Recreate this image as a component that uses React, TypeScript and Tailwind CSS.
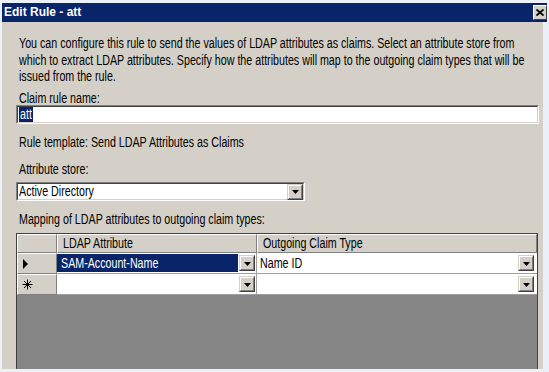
import React from "react";

const F = "font-['Liberation_Sans',Arial,sans-serif]";

function S({ children, className = "" }: { children: React.ReactNode; className?: string }) {
  return <span className={"inline-block scale-y-[1.3] " + className}>{children}</span>;
}

function DropBtn() {
  return (
    <div className="w-[16px] h-[16px] shrink-0 bg-[#d4d0c8] border border-t-[#d4d0c8] border-l-[#d4d0c8] border-r-[#404040] border-b-[#404040] flex">
      <div className="flex-1 border border-t-white border-l-white border-r-[#808080] border-b-[#808080] flex items-center justify-center pt-[1px]">
        <svg width="7" height="4" viewBox="0 0 7 4">
          <path d="M0 0h7L3.5 4z" fill="#000" />
        </svg>
      </div>
    </div>
  );
}

function Sunken({ className = "", children }: { className?: string; children?: React.ReactNode }) {
  return (
    <div className={"border border-t-[#808080] border-l-[#808080] border-r-white border-b-white " + className}>
      <div className="h-full border border-t-[#404040] border-l-[#404040] border-r-[#d4d0c8] border-b-[#d4d0c8] bg-white flex items-center">
        {children}
      </div>
    </div>
  );
}

function Raised({ className = "", children }: { className?: string; children?: React.ReactNode }) {
  return (
    <div className={"bg-[#d4d0c8] border border-t-white border-l-white border-r-[#808080] border-b-[#808080] flex items-center " + className}>
      {children}
    </div>
  );
}

function Line({ children, className = "" }: { children: React.ReactNode; className?: string }) {
  return (
    <div className={"h-[16.5px] leading-[16.5px] whitespace-nowrap " + className}>
      <S>{children}</S>
    </div>
  );
}

export default function App() {
  return (
    <div className={"w-[549px] h-[372px] bg-[#ecf1f8] pt-[3px] pl-[2px] overflow-hidden text-[10.7px] text-black " + F}>
      {/* title bar */}
      <div className="w-[545px] h-[19px] bg-[#0a246a] flex items-center justify-between">
        <div className="pl-[2px] text-white font-bold text-[12px] leading-[19px]">
          <span className="inline-block scale-y-[1.12]">Edit Rule - att</span>
        </div>
        <div className="w-[14px] h-[15px] bg-[#d4d0c8] border border-t-white border-l-white border-r-[#404040] border-b-[#404040] flex items-center justify-center">
          <svg width="8" height="7" viewBox="0 0 8 7">
            <path d="M0.5 0.5L7.5 6.5M7.5 0.5L0.5 6.5" stroke="#000" strokeWidth="1.8" />
          </svg>
        </div>
      </div>

      {/* body */}
      <div className="w-[541px] h-[347px] bg-[#d4d0c8] flex flex-col overflow-hidden">
        <div className="pl-[17px] mt-[13px]">
          <Line>You can configure this rule to send the values of LDAP attributes as claims. Select an attribute store from</Line>
          <Line>which to extract LDAP attributes. Specify how the attributes will map to the outgoing claim types that will be</Line>
          <Line>issued from the rule.</Line>
        </div>

        <div className="pl-[17px] mt-[8.5px] h-[11px] leading-[11px]">
          <S>Claim rule name:</S>
        </div>
        <Sunken className="ml-[14px] mt-[1px] w-[523px] h-[19px]">
          <div className="pl-[1px] leading-[15px] h-[15px]">
            <span className="inline-block bg-[#0a246a] text-white px-[1px] h-[15px] leading-[15px]">
              <S>att</S>
            </span>
          </div>
        </Sunken>

        <div className="pl-[17px] mt-[9.5px]">
          <Line>Rule template: Send LDAP Attributes as Claims</Line>
        </div>

        <div className="pl-[17px] mt-[14px] h-[11px] leading-[11px]">
          <S>Attribute store:</S>
        </div>
        <Sunken className="ml-[14px] mt-[7px] w-[289px] h-[19px]">
          <div className="flex-1 pl-[1px] leading-[15px]">
            <S>Active Directory</S>
          </div>
          <DropBtn />
        </Sunken>

        <div className="pl-[17px] mt-[12.5px] h-[11px] leading-[11px]">
          <S>Mapping of LDAP attributes to outgoing claim types:</S>
        </div>

        {/* grid */}
        <div className="ml-[14px] mt-[8.5px] w-[522px] flex-1 border-t border-l border-r border-[#404040] bg-[#858585] flex flex-col">
          <div className="h-[19px] flex">
            <Raised className="w-[40px]" />
            <Raised className="w-[200px] pl-[5px]">
              <S>LDAP Attribute</S>
            </Raised>
            <Raised className="flex-1 pl-[5px]">
              <S>Outgoing Claim Type</S>
            </Raised>
          </div>
          {/* row 1 */}
          <div className="h-[21px] flex">
            <Raised className="w-[40px] pl-[5px]">
              <svg width="6" height="10" viewBox="0 0 6 10">
                <path d="M0 0L5 5L0 10z" fill="#000" />
              </svg>
            </Raised>
            <div className="w-[200px] flex bg-white border-r border-b border-[#a0a0a0]">
              <div className="flex-1 bg-[#0a246a] text-white flex items-center pl-[4px] my-[1px]">
                <S>SAM-Account-Name</S>
              </div>
              <div className="flex items-center pl-[1px] pr-[1px]">
                <DropBtn />
              </div>
            </div>
            <div className="flex-1 flex bg-white border-b border-[#a0a0a0]">
              <div className="flex-1 flex items-center pl-[3px]">
                <S>Name ID</S>
              </div>
              <div className="flex items-center pr-[3px]">
                <DropBtn />
              </div>
            </div>
          </div>
          {/* row 2 */}
          <div className="h-[21px] flex">
            <Raised className="w-[40px] pl-[4px]">
              <svg width="11" height="11" viewBox="0 0 11 11">
                <path d="M5.5 0.5V10.5M0.5 5.5H10.5M2 2L9 9M9 2L2 9" stroke="#000" strokeWidth="1" />
              </svg>
            </Raised>
            <div className="w-[200px] flex bg-white border-r border-b border-[#a0a0a0]">
              <div className="flex-1" />
              <div className="flex items-center pl-[1px] pr-[1px]">
                <DropBtn />
              </div>
            </div>
            <div className="flex-1 flex bg-white border-b border-[#a0a0a0]">
              <div className="flex-1" />
              <div className="flex items-center pr-[3px]">
                <DropBtn />
              </div>
            </div>
          </div>
        </div>
      </div>
    </div>
  );
}
